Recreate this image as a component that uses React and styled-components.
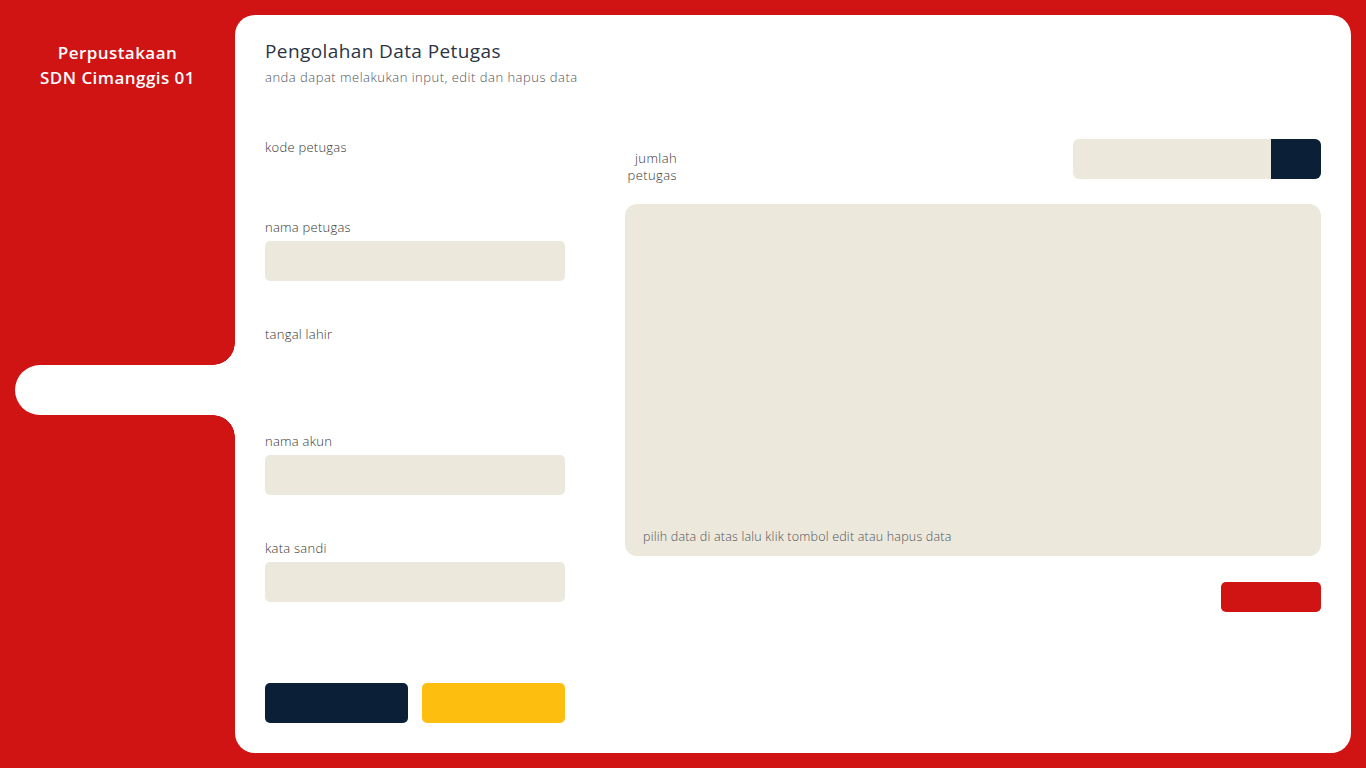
import React from 'react'
import styled, { createGlobalStyle } from 'styled-components'

const GlobalStyle = createGlobalStyle`
    * { box-sizing: border-box; }
    body {
        margin: 0;
        background: #d01313;
        font-family: 'Open Sans', 'Noto Sans', Arial, sans-serif;
    }
`

const Page = styled.div`
    display: flex;
    height: 768px;
    padding: 15px 15px 15px 0;
    background: #d01313;
`
const Sidebar = styled.aside`
    width: 235px;
    display: flex;
    flex-direction: column;
    padding-top: 25px;
`
const Brand = styled.div`
    color: #fff;
    text-align: center;
    font-weight: 600;
    font-size: 17px;
    letter-spacing: 0.45px;
    line-height: 25px;
`
const MenuItem = styled.div`
    position: relative;
    margin-top: 275px;
    margin-left: 15px;
    height: 50px;
    background: #fff;
    border-radius: 25px 0 0 25px;

    &::before, &::after {
        content: '';
        position: absolute;
        right: 0;
        width: 22px;
        height: 22px;
    }
    &::before {
        top: -22px;
        background: radial-gradient(circle at 0 0, transparent 21.5px, #fff 22px);
    }
    &::after {
        bottom: -22px;
        background: radial-gradient(circle at 0 100%, transparent 21.5px, #fff 22px);
    }
`
const Panel = styled.main`
    flex: 1;
    background: #fff;
    border-radius: 20px;
    padding: 24px 30px 30px;
`
const Title = styled.h1`
    margin: 0;
    font-size: 19px;
    letter-spacing: 0.4px;
    line-height: 24px;
    font-weight: 500;
    color: #2b3445;
`
const Subtitle = styled.p`
    margin: 5px 0 0;
    font-size: 13px;
    letter-spacing: 0.5px;
    line-height: 18px;
    font-weight: 300;
    color: #4f545c;
`
const Body = styled.div`
    display: flex;
    gap: 60px;
    margin-top: 53px;
`
const FormColumn = styled.div`
    width: 300px;
    display: flex;
    flex-direction: column;
`
const Field = styled.div`
    display: flex;
    flex-direction: column;
    gap: 6px;
    margin-bottom: ${props => props.$tight ? '18px' : '45px'};
`
const Label = styled.label`
    font-size: 13px;
    letter-spacing: 0.25px;
    line-height: 16px;
    font-weight: 300;
    color: #363636;
`
const Input = styled.div`
    height: 40px;
    border-radius: 5px;
    background: ${props => props.$ghost ? '#fff' : '#ece8db'};
`
const ButtonRow = styled.div`
    display: flex;
    gap: 14px;
    margin-top: 36px;
`
const Button = styled.div`
    height: ${props => props.$h || '40px'};
    width: ${props => props.$w || '143px'};
    border-radius: 5px;
    background: ${props => props.$color};
`
const DataColumn = styled.div`
    flex: 1;
    display: flex;
    flex-direction: column;
`
const TopRow = styled.div`
    display: flex;
    align-items: flex-start;
    height: 40px;
`
const CountLabel = styled.div`
    width: 52px;
    padding-top: 11px;
    text-align: right;
    font-size: 13px;
    letter-spacing: 0.4px;
    line-height: 17px;
    font-weight: 300;
    color: #363636;
    white-space: nowrap;
`
const Search = styled.div`
    margin-left: auto;
    width: 248px;
    height: 40px;
    display: flex;
    border-radius: 6px;
    overflow: hidden;
`
const SearchInput = styled.div`
    flex: 1;
    background: #ece8db;
`
const SearchButton = styled.div`
    width: 50px;
    background: #0b1f37;
`
const TableBox = styled.div`
    margin-top: 25px;
    height: 352px;
    background: #ece8db;
    border-radius: 12px;
    display: flex;
    flex-direction: column;
    justify-content: flex-end;
    padding: 0 18px 11px;
`
const Hint = styled.span`
    font-size: 12.5px;
    letter-spacing: 0.2px;
    line-height: 16px;
    font-weight: 300;
    color: #4f545c;
`
const Actions = styled.div`
    display: flex;
    justify-content: flex-end;
    margin-top: 26px;
`

export default function App() {
    return (
        <>
            <GlobalStyle />
            <Page>
                <Sidebar>
                    <Brand>Perpustakaan<br />SDN Cimanggis 01</Brand>
                    <MenuItem />
                </Sidebar>
                <Panel>
                    <Title>Pengolahan Data Petugas</Title>
                    <Subtitle>anda dapat melakukan input, edit dan hapus data</Subtitle>
                    <Body>
                        <FormColumn>
                            <Field $tight>
                                <Label>kode petugas</Label>
                                <Input $ghost />
                            </Field>
                            <Field>
                                <Label>nama petugas</Label>
                                <Input />
                            </Field>
                            <Field>
                                <Label>tangal lahir</Label>
                                <Input $ghost />
                            </Field>
                            <Field>
                                <Label>nama akun</Label>
                                <Input />
                            </Field>
                            <Field>
                                <Label>kata sandi</Label>
                                <Input />
                            </Field>
                            <ButtonRow>
                                <Button $color="#0b1f37" />
                                <Button $color="#febe10" />
                            </ButtonRow>
                        </FormColumn>
                        <DataColumn>
                            <TopRow>
                                <CountLabel>jumlah<br />petugas</CountLabel>
                                <Search>
                                    <SearchInput />
                                    <SearchButton />
                                </Search>
                            </TopRow>
                            <TableBox>
                                <Hint>pilih data di atas lalu klik tombol edit atau hapus data</Hint>
                            </TableBox>
                            <Actions>
                                <Button $color="#d01313" $w="100px" $h="30px" />
                            </Actions>
                        </DataColumn>
                    </Body>
                </Panel>
            </Page>
        </>
    )
}
